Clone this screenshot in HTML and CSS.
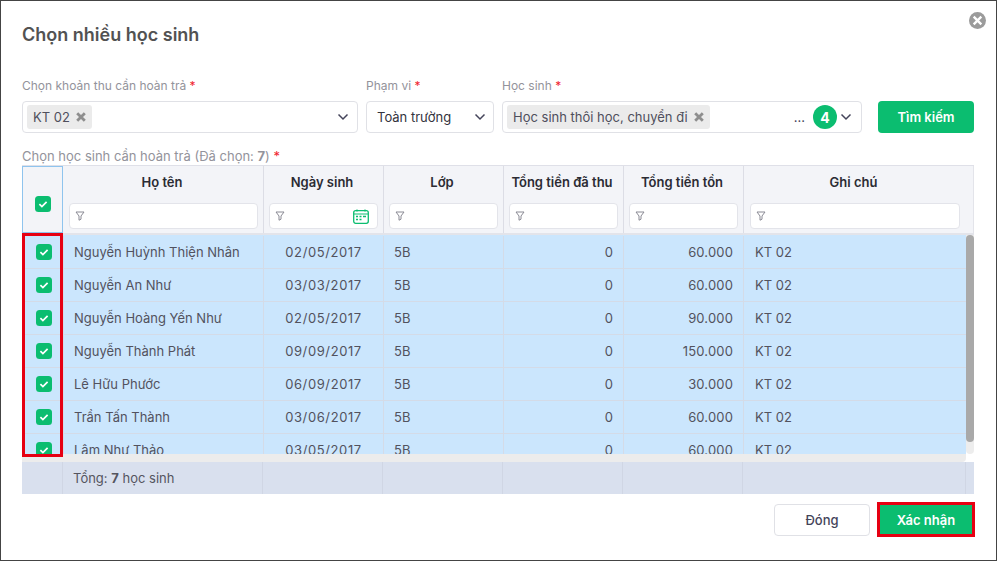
FILE: index.html
```html
<!DOCTYPE html>
<html lang="vi">
<head>
<meta charset="utf-8">
<title>Chọn nhiều học sinh</title>
<link rel="stylesheet" href="styles.css">
</head>
<body>
<svg class="defs" width="0" height="0" aria-hidden="true">
  <symbol id="funnel" viewBox="0 0 10 10"><path d="M1 1h8L6 5v3.2L4 9.2V5z" fill="none" stroke="#8a8a94" stroke-width="1"/></symbol>
  <symbol id="chev" viewBox="0 0 12 8"><path d="M1.5 1.5L6 6l4.5-4.5" fill="none" stroke="#44445a" stroke-width="1.5"/></symbol>
  <symbol id="tick" viewBox="0 0 16 16"><rect width="16" height="16" rx="3.5" fill="#0bbd70"/><path d="M4.4 8.2l2.5 2.4 4.7-4.7" fill="none" stroke="#fff" stroke-width="1.7"/></symbol>
  <symbol id="x" viewBox="0 0 10 10"><path d="M1.2 1.2l7.6 7.6M8.8 1.2L1.2 8.8" stroke="#8e8e8e" stroke-width="2.8"/></symbol>
</svg>
<div class="dialog">
  <svg class="close" viewBox="0 0 16 16" aria-label="Đóng"><circle cx="8" cy="8" r="8" fill="#9b9b9b"/><path d="M4.4 4.4l7.2 7.2M11.6 4.4l-7.2 7.2" stroke="#fff" stroke-width="2.2"/></svg>
  <h1 class="title">Chọn nhiều học sinh</h1>

  <div class="filters">
    <div class="field f-fee">
      <label class="lbl">Chọn khoản thu cần hoàn trả <span class="req">*</span></label>
      <div class="select">
        <span class="tag">KT 02 <svg class="tag-x"><use href="#x"/></svg></span>
        <svg class="chev"><use href="#chev"/></svg>
      </div>
    </div>
    <div class="field f-scope">
      <label class="lbl">Phạm vi <span class="req">*</span></label>
      <div class="select plain">
        <span class="val">Toàn trường</span>
        <svg class="chev"><use href="#chev"/></svg>
      </div>
    </div>
    <div class="field f-student">
      <label class="lbl">Học sinh <span class="req">*</span></label>
      <div class="select">
        <span class="tag">Học sinh thôi học, chuyển đi <svg class="tag-x"><use href="#x"/></svg></span>
        <span class="dots">...</span>
        <span class="count">4</span>
        <svg class="chev tight"><use href="#chev"/></svg>
      </div>
    </div>
    <button class="btn primary search">Tìm kiếm</button>
  </div>

  <div class="lbl table-lbl">Chọn học sinh cần hoàn trả (Đã chọn: <b>7</b>) <span class="req">*</span></div>

  <div class="table">
    <div class="thead cols">
      <div class="th th-check"><svg class="check"><use href="#tick"/></svg></div>
      <div class="th"><span class="th-t">Họ tên</span><div class="finput"><svg class="funnel"><use href="#funnel"/></svg></div></div>
      <div class="th"><span class="th-t">Ngày sinh</span><div class="finput"><svg class="funnel"><use href="#funnel"/></svg>
        <svg class="cal" width="16" height="15" viewBox="0 0 16 15"><rect x="0.7" y="1.7" width="14.6" height="12.6" rx="2" fill="none" stroke="#0bbd70" stroke-width="1.3"/><path d="M1 5h14M4 .5v2M12 .5v2" stroke="#0bbd70" stroke-width="1.2"/><path d="M3 7.5h2M6.5 7.5h2M10 7.5h3M3 10.5h2M6.5 10.5h2" stroke="#0bbd70" stroke-width="1.4"/></svg></div></div>
      <div class="th"><span class="th-t">Lớp</span><div class="finput"><svg class="funnel"><use href="#funnel"/></svg></div></div>
      <div class="th"><span class="th-t">Tổng tiền đã thu</span><div class="finput"><svg class="funnel"><use href="#funnel"/></svg></div></div>
      <div class="th"><span class="th-t">Tổng tiền tồn</span><div class="finput"><svg class="funnel"><use href="#funnel"/></svg></div></div>
      <div class="th th-last"><span class="th-t">Ghi chú</span><div class="finput"><svg class="funnel"><use href="#funnel"/></svg></div></div>
    </div>

    <div class="tbody-wrap">
      <div class="tbody">
        <div class="row cols"><div class="td c"><svg class="check"><use href="#tick"/></svg></div><div class="td">Nguyễn Huỳnh Thiện Nhân</div><div class="td c">02/05/2017</div><div class="td">5B</div><div class="td r">0</div><div class="td r">60.000</div><div class="td">KT 02</div></div>
        <div class="row cols"><div class="td c"><svg class="check"><use href="#tick"/></svg></div><div class="td">Nguyễn An Như</div><div class="td c">03/03/2017</div><div class="td">5B</div><div class="td r">0</div><div class="td r">60.000</div><div class="td">KT 02</div></div>
        <div class="row cols"><div class="td c"><svg class="check"><use href="#tick"/></svg></div><div class="td">Nguyễn Hoàng Yến Như</div><div class="td c">02/05/2017</div><div class="td">5B</div><div class="td r">0</div><div class="td r">90.000</div><div class="td">KT 02</div></div>
        <div class="row cols"><div class="td c"><svg class="check"><use href="#tick"/></svg></div><div class="td">Nguyễn Thành Phát</div><div class="td c">09/09/2017</div><div class="td">5B</div><div class="td r">0</div><div class="td r">150.000</div><div class="td">KT 02</div></div>
        <div class="row cols"><div class="td c"><svg class="check"><use href="#tick"/></svg></div><div class="td">Lê Hữu Phước</div><div class="td c">06/09/2017</div><div class="td">5B</div><div class="td r">0</div><div class="td r">30.000</div><div class="td">KT 02</div></div>
        <div class="row cols"><div class="td c"><svg class="check"><use href="#tick"/></svg></div><div class="td">Trần Tấn Thành</div><div class="td c">03/06/2017</div><div class="td">5B</div><div class="td r">0</div><div class="td r">60.000</div><div class="td">KT 02</div></div>
        <div class="row cols"><div class="td c"><svg class="check"><use href="#tick"/></svg></div><div class="td">Lâm Như Thảo</div><div class="td c">03/05/2017</div><div class="td">5B</div><div class="td r">0</div><div class="td r">60.000</div><div class="td">KT 02</div></div>
      </div>
      <div class="vbar"><div class="vthumb"></div></div>
    </div>
    <div class="hbar"></div>

    <div class="tfoot">
      <div class="tf"></div>
      <div class="tf">Tổng:&nbsp;<b>7</b>&nbsp;học sinh</div>
      <div class="tf"></div><div class="tf"></div><div class="tf"></div><div class="tf"></div>
      <div class="tf"></div>
      <div class="tf tf-last"></div>
    </div>
    <div class="redbox"></div>
  </div>

  <div class="actions">
    <button class="btn ghost">Đóng</button>
    <button class="btn primary confirm">Xác nhận</button>
  </div>
</div>
</body>
</html>
```

FILE: styles.css
```css
* { box-sizing: border-box; }
html, body { margin: 0; padding: 0; }
body {
  width: 997px;
  height: 561px;
  overflow: hidden;
  background: #fff;
  font-family: Inter, "Liberation Sans", sans-serif;
  font-size: 13px;
  color: #4f4f5c;
}
.defs { position: absolute; }
.dialog {
  position: relative;
  width: 997px;
  height: 561px;
  border: 1px solid #444;
  padding: 0 22px 0 21px;
  background: #fff;
}
.close { position: absolute; left: 968px; top: 11px; width: 17px; height: 17px; }
.title {
  margin: 0;
  padding-top: 22px;
  height: 73px;
  font-size: 18px;
  line-height: 23px;
  font-weight: 600;
  color: #525252;
}
.filters { display: flex; align-items: flex-end; }
.field { display: flex; flex-direction: column; }
.f-fee { width: 336px; margin-right: 8px; }
.f-scope { width: 128px; margin-right: 8px; }
.f-student { width: 360px; margin-right: 16px; }
.lbl { display: block; font-size: 13px; line-height: 16px; color: #93939b; }
.req { color: #f0222e; }
.field .lbl { font-size: 12px; height: 27px; padding-top: 4px; }
.select {
  display: flex;
  align-items: center;
  height: 32px;
  padding: 0 4px;
  border: 1px solid #e0e1e6;
  border-radius: 4px;
  background: #fff;
}
.plain { padding-left: 10px; }
.val { color: #33333d; font-size: 13px; flex: 1; }
.tag {
  display: flex;
  align-items: center;
  height: 24px;
  padding: 0 6px;
  border-radius: 3px;
  background: #ebebeb;
  color: #4f4f5c;
  font-size: 13px;
  white-space: nowrap;
}
.tag-x { width: 10px; height: 10px; margin-left: 6px; }
.chev { width: 12px; height: 8px; margin-left: auto; margin-right: 4px; }
.chev.tight { margin-right: 5px; margin-left: 3px; }
.plain .chev { margin-right: 3px; }
.dots { margin-left: auto; margin-right: 8px; color: #44445a; line-height: 24px; }
.count {
  width: 24px; height: 24px; border-radius: 50%;
  background: #0bbd70; color: #fff;
  font-weight: 700; font-size: 14px;
  display: flex; align-items: center; justify-content: center;
}
.btn {
  font-family: inherit;
  font-size: 13px;
  font-weight: 600;
  border-radius: 4px;
  cursor: pointer;
  padding: 0;
}
.primary { background: #0bbd70; color: #fff; border: 0; }
.search { width: 96px; height: 32px; }
.table-lbl { height: 16px; margin-top: 15px; }
.table { position: relative; width: 952px; margin-top: 1px; }
.cols { display: grid; grid-template-columns: 42px 200px 120px 120px 120px 120px 1fr; }
.thead { height: 70px; background: #f3f4f8; border-top: 1px solid #dfe0e8; border-bottom: 2px solid #e3e4ea; }
.th {
  display: flex; flex-direction: column; align-items: center;
  border-right: 1px solid #dcdde5;
  padding: 0 5px;
  position: relative;
}
.th-check { width: 41px; border: 1px solid #8fc4ee; justify-content: flex-start; padding-top: 29px; }
.th-last { border-right: 1px solid #e3e4ea; padding-right: 13px; padding-left: 6px; }
.th-t { height: 37px; padding-right: 3px; line-height: 33px; font-weight: 600; color: #2b2b33; font-size: 13px; white-space: nowrap; }
.finput {
  width: 100%;
  height: 26px;
  background: #fff;
  border: 1px solid #e3e4ea;
  border-radius: 4px;
  display: flex; align-items: center; justify-content: space-between;
  padding: 0 8px 0 5px;
}
.funnel { width: 10px; height: 10px; }
.check { width: 16px; height: 16px; display: block; }
.tbody-wrap { display: flex; height: 219px; }
.tbody { width: 944px; height: 219px; padding-top: 1px; overflow: hidden; background: #cbe6fd; }
.tbody .cols { grid-template-columns: 42px 200px 120px 120px 120px 120px 222px; }
.row { height: 33px; background: #cbe6fd; border-bottom: 1px solid #d4dbe7; }
.td {
  display: flex; align-items: center;
  padding: 0 10px;
  border-right: 1px solid #d4dbe7;
  color: #52525e;
  font-size: 13px;
  white-space: nowrap;
}
.td:last-child { border-right: 0; padding-left: 11px; }
.td.c { justify-content: center; letter-spacing: 0.6px; }
.td.r { justify-content: flex-end; letter-spacing: 0.15px; }
.td:first-child { padding-left: 2px; padding-right: 0; }
.vbar { width: 8px; height: 219px; background: #ededed; border-radius: 0 0 4px 4px; }
.vthumb { height: 207px; background: #a9a9a9; border-radius: 4px; }
.hbar { width: 944px; height: 8px; background: #ececec; border-radius: 0 0 4px 0; }
.tfoot {
  display: grid;
  grid-template-columns: 41px 200px 120px 120px 120px 120px 223px 8px;
  height: 32px;
  background: #d9e0ee;
}
.tf {
  display: flex; align-items: center;
  padding: 0 10px;
  border-right: 1px solid #d0d6e4;
  color: #55555f;
  white-space: nowrap;
}
.tf-last { border-right: 0; padding: 0; }
.redbox {
  position: absolute;
  left: 0; top: 68px;
  width: 41px; height: 224px;
  border: 3px solid #e60012;
  pointer-events: none;
}
.actions { display: flex; justify-content: flex-end; align-items: center; margin-top: 8px; margin-right: -1px; height: 35px; }
.ghost {
  width: 96px; height: 32px;
  background: #fff; border: 1px solid #e0e1e6;
  color: #44445a; font-weight: 500;
  margin-right: 7px;
}
.confirm {
  width: 98px; height: 35px;
  border: 3px solid #e60012;
  border-radius: 0;
}
```
